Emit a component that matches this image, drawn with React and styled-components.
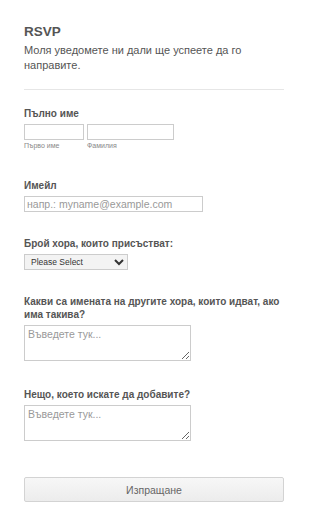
import React from "react";
import styled, { createGlobalStyle } from "styled-components";

const Global = createGlobalStyle`
  body {
    margin: 0;
    background: #fff;
    font-family: "Liberation Sans", Arial, sans-serif;
    color: #555;
  }
`;

const Form = styled.form`
  width: 260px;
  padding: 23px 26px 20px 24px;
`;

const Header = styled.div`
  padding-bottom: 16px;
  border-bottom: 1px solid #e6e6e6;
  margin-bottom: 17px;
`;

const Title = styled.h2`
  margin: 0;
  font-size: 13.5px;
  line-height: 17px;
  font-weight: bold;
  color: #555;
`;

const Subtitle = styled.div`
  margin-top: 3px;
  font-size: 11px;
  line-height: 15px;
  color: #555;
`;

const Field = styled.div`
  margin-bottom: ${(p) => p.gap ?? 25}px;
`;

const Label = styled.label`
  display: block;
  font-size: 10px;
  line-height: 13px;
  font-weight: bold;
  color: #555;
  margin-bottom: 4px;
`;

const Row = styled.div`
  display: flex;
  gap: 3px;
`;

const Sub = styled.div`
  display: flex;
  flex-direction: column;
`;

const SubLabel = styled.span`
  font-size: 7px;
  line-height: 9px;
  color: #888;
  margin-top: 1px;
`;

const Input = styled.input`
  display: block;
  box-sizing: border-box;
  width: ${(p) => p.w}px;
  height: 16px;
  border: 1px solid #ccc;
  padding: 0 2px;
  margin: 0;
  font-family: "Liberation Sans", Arial, sans-serif;
  font-size: 10.5px;
  color: #555;
  &::placeholder {
    color: #999;
  }
`;

const Select = styled.select`
  display: block;
  box-sizing: border-box;
  width: 104px;
  height: 16px;
  border: 1px solid #ccc;
  background: #f3f3f3;
  font-family: "Liberation Sans", Arial, sans-serif;
  font-size: 8.5px;
  color: #333;
  padding: 0 2px;
  margin: 0;
`;

const Area = styled.textarea`
  display: block;
  box-sizing: border-box;
  width: 167px;
  height: 36px;
  border: 1px solid #ccc;
  padding: 2px 3px;
  margin: 0;
  resize: both;
  font-family: "Liberation Sans", Arial, sans-serif;
  font-size: 10.5px;
  color: #555;
  &::placeholder {
    color: #999;
  }
`;

const Submit = styled.button`
  display: block;
  box-sizing: border-box;
  width: 260px;
  height: 25px;
  border: 1px solid #d3d3d3;
  border-radius: 2px;
  background: linear-gradient(#f7f7f7, #ececec);
  font-family: "Liberation Sans", Arial, sans-serif;
  font-size: 10.5px;
  color: #666;
  margin-top: 36px;
`;

export default function App() {
  return (
    <>
      <Global />
      <Form onSubmit={(e) => e.preventDefault()}>
        <Header>
          <Title>RSVP</Title>
          <Subtitle>Моля уведомете ни дали ще успеете да го направите.</Subtitle>
        </Header>

        <Field gap={29}>
          <Label>Пълно име</Label>
          <Row>
            <Sub>
              <Input w={60} />
              <SubLabel>Първо име</SubLabel>
            </Sub>
            <Sub>
              <Input w={87} />
              <SubLabel>Фамилия</SubLabel>
            </Sub>
          </Row>
        </Field>

        <Field>
          <Label>Имейл</Label>
          <Input w={179} placeholder="напр.: myname@example.com" />
        </Field>

        <Field>
          <Label>Брой хора, които присъстват:</Label>
          <Select defaultValue="">
            <option value="">Please Select</option>
            <option>1</option>
            <option>2</option>
            <option>3</option>
            <option>4</option>
          </Select>
        </Field>

        <Field gap={27}>
          <Label>Какви са имената на другите хора, които идват, ако има такива?</Label>
          <Area placeholder="Въведете тук..." />
        </Field>

        <Field gap={0}>
          <Label>Нещо, което искате да добавите?</Label>
          <Area placeholder="Въведете тук..." />
        </Field>

        <Submit type="submit">Изпращане</Submit>
      </Form>
    </>
  );
}
